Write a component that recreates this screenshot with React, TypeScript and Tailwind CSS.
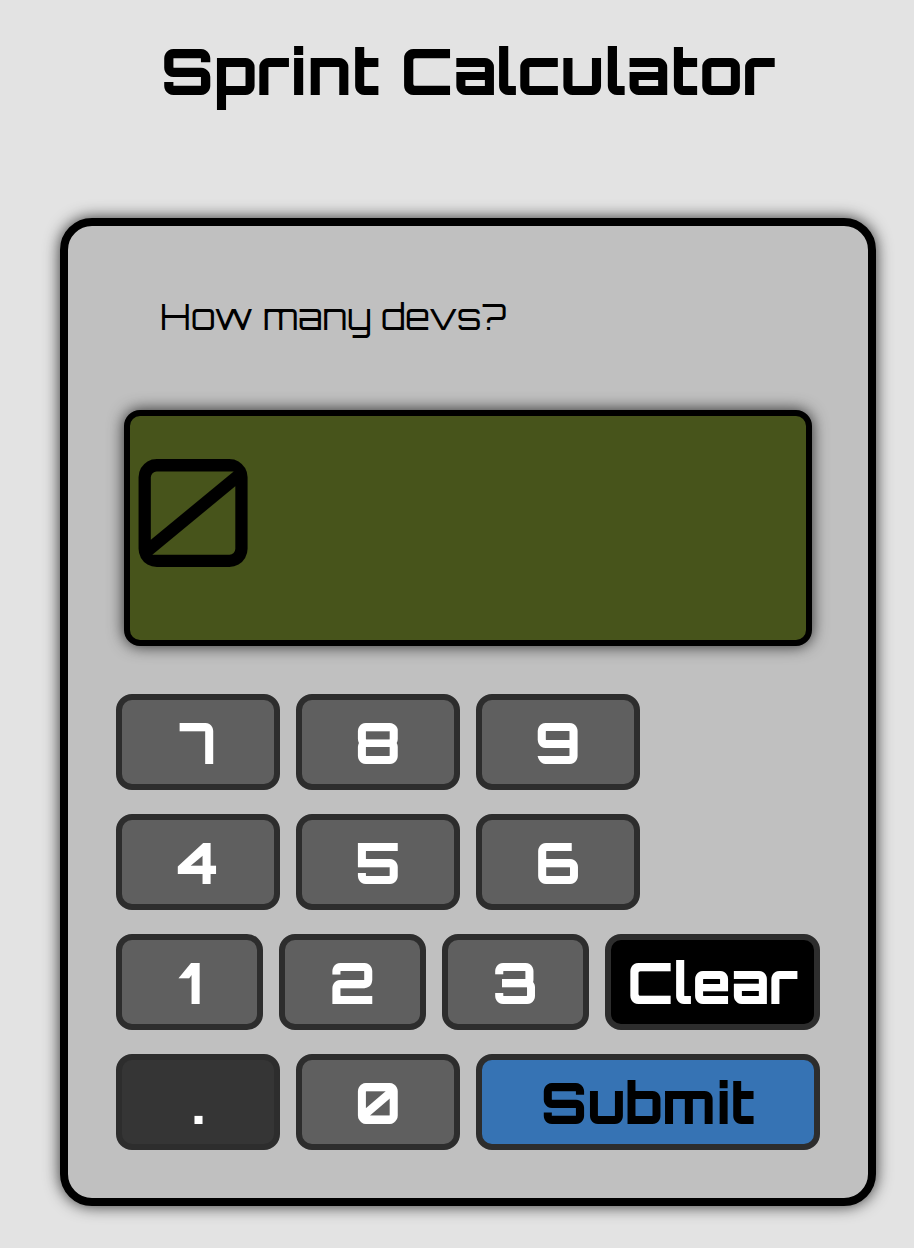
import { useState } from 'react';
import clsx from 'clsx';

const base =
  'h-24 min-w-0 rounded-2xl border-[6px] border-[#2d2d2d] pt-0.5 text-[56px] font-extrabold leading-none';
const digit = 'flex-1 bg-[#5f5f5f] text-white';

export default function App() {
  const [value, setValue] = useState('0');
  const press = (key: string) =>
    setValue((current) => (current === '0' && key !== '.' ? key : current + key));

  const key = (label: string) => (
    <button key={label} type="button" className={clsx(base, digit)} onClick={() => press(label)}>
      {label}
    </button>
  );

  return (
    <div className="min-h-screen bg-[#e3e3e3] pb-[42px] pl-[60px] pr-[38px] pt-9 font-['Orbitron','Inter',sans-serif] text-black">
      <h1 className="whitespace-nowrap text-center text-[64px] font-extrabold leading-[70px]">
        Sprint Calculator
      </h1>
      <main className="mt-28 rounded-[32px] border-8 border-black bg-[#c0c0c0] px-12 pb-12 pt-16 shadow-[0_0_16px_rgba(0,0,0,0.8)]">
        <label htmlFor="answer" className="block pl-11 text-[36px] leading-[54px]">
          How many devs?
        </label>
        <div className="mx-2 mt-[66px]">
          <input
            id="answer"
            value={value}
            onChange={(event) => setValue(event.target.value)}
            className="block h-[236px] w-full rounded-2xl border-[6px] border-black bg-[#47541b] pb-[38px] text-[150px] shadow-[0_0_16px_rgba(0,0,0,0.8)] outline-none"
          />
        </div>
        <div className="mt-12 flex flex-col gap-6">
          <div className="mr-[180px] flex gap-4">{['7', '8', '9'].map(key)}</div>
          <div className="mr-[180px] flex gap-4">{['4', '5', '6'].map(key)}</div>
          <div className="flex gap-4">
            {['1', '2', '3'].map(key)}
            <button
              type="button"
              className={clsx(base, 'w-[215px] bg-black text-white')}
              onClick={() => setValue('0')}
            >
              Clear
            </button>
          </div>
          <div className="grid grid-cols-[1fr_1fr_344px] gap-4">
            <button
              type="button"
              className={clsx(base, 'bg-[#353535] text-white')}
              onClick={() => press('.')}
            >
              .
            </button>
            {key('0')}
            <button type="submit" className={clsx(base, 'bg-[#3673b4]')}>
              Submit
            </button>
          </div>
        </div>
      </main>
    </div>
  );
}
